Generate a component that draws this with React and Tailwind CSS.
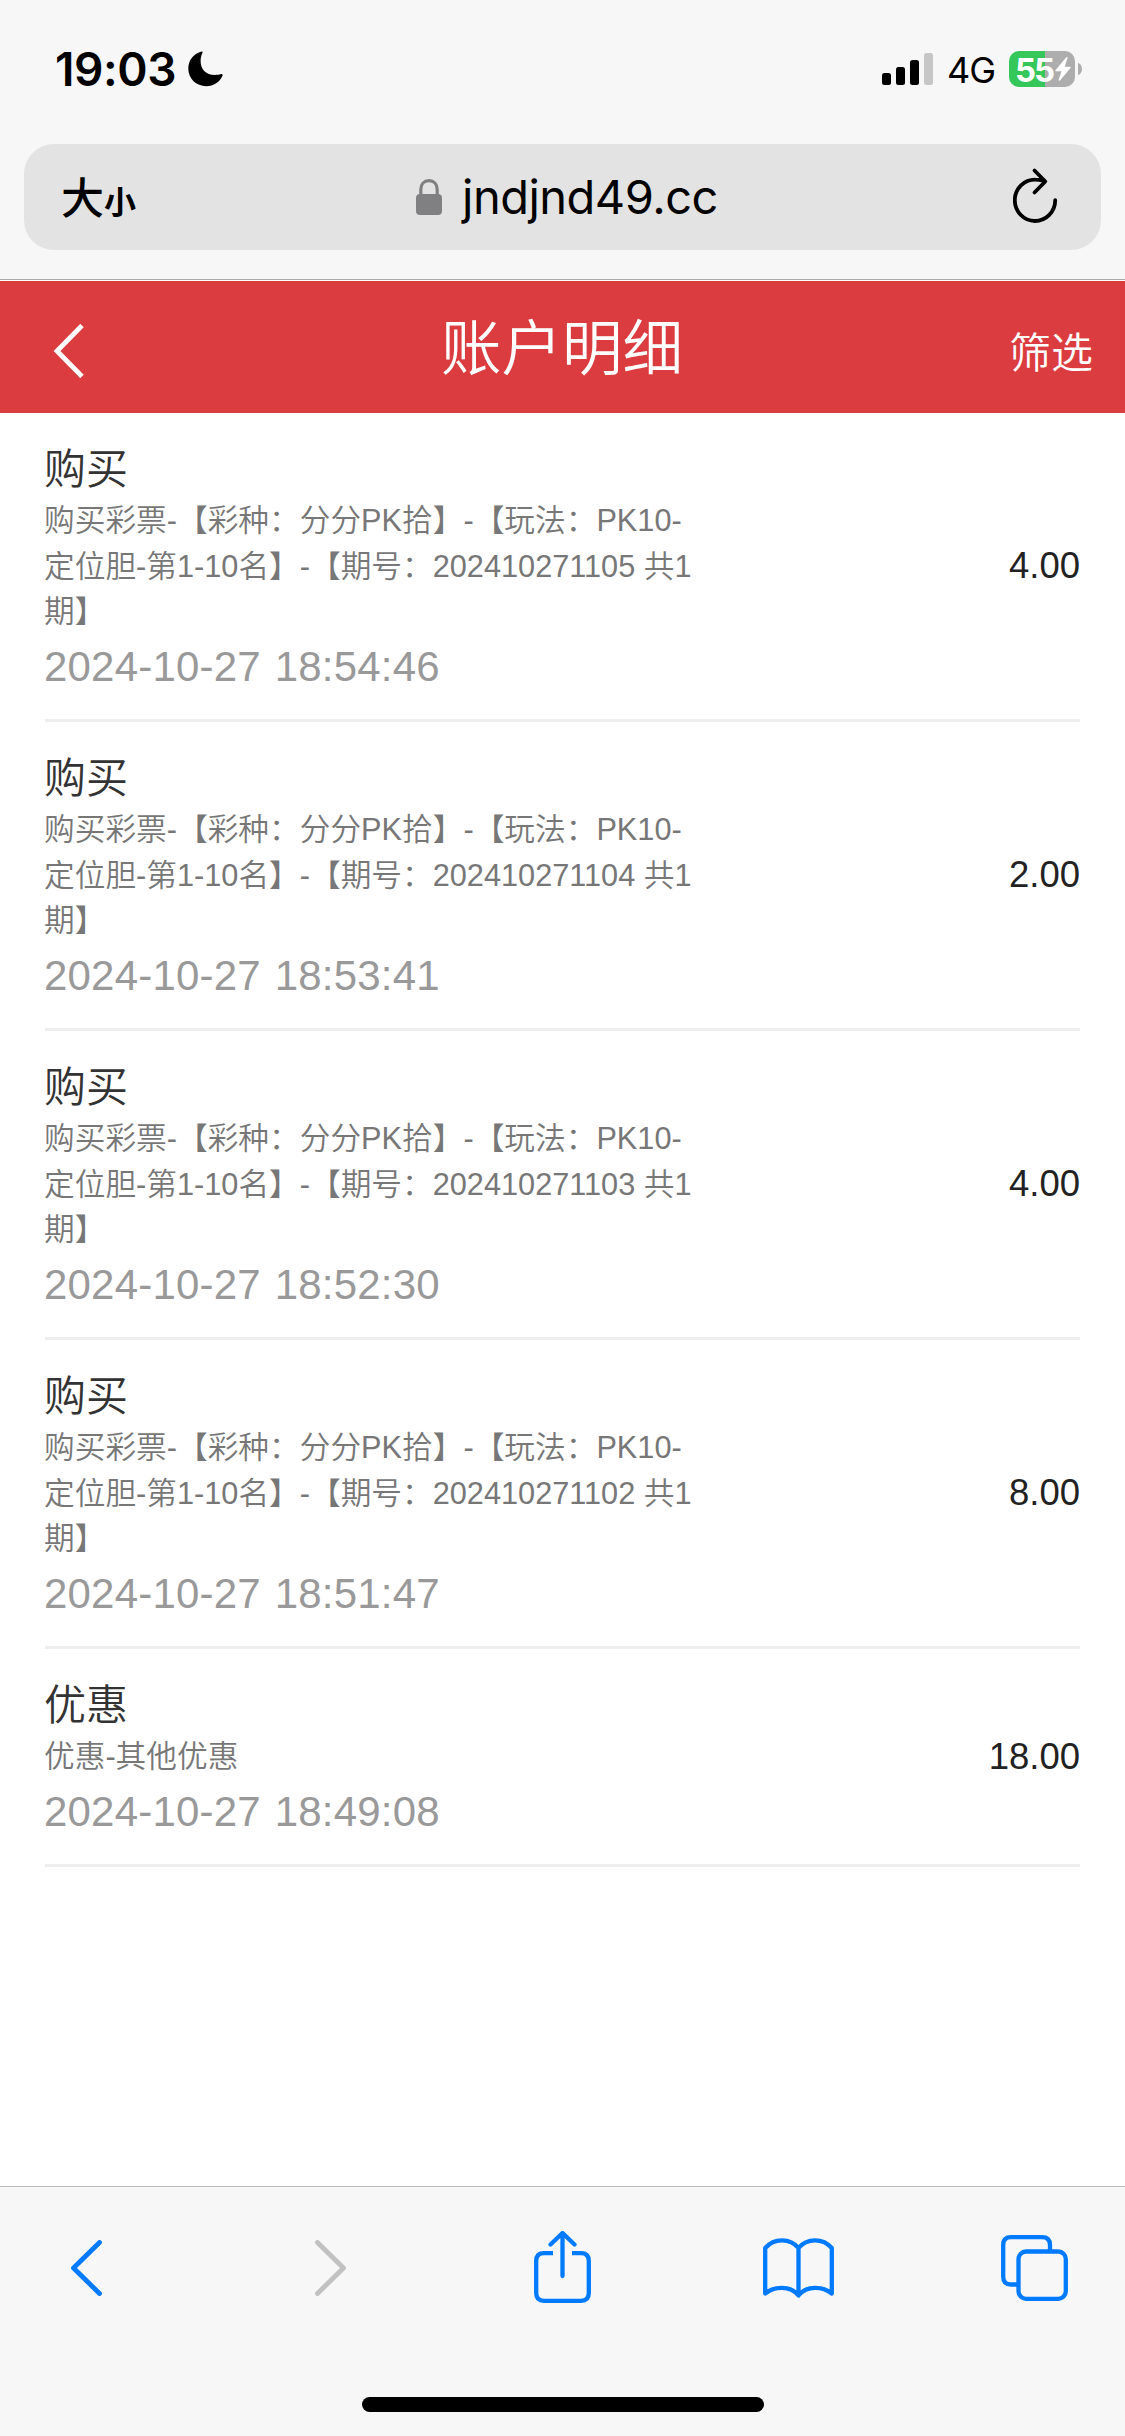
const records = [
    {
        id: 1,
        type: '购买',
        detail: '购买彩票-【彩种：分分PK拾】-【玩法：PK10-定位胆-第1-10名】-【期号：202410271105 共1期】',
        time: '2024-10-27 18:54:46',
        amount: '4.00'
    },
    {
        id: 2,
        type: '购买',
        detail: '购买彩票-【彩种：分分PK拾】-【玩法：PK10-定位胆-第1-10名】-【期号：202410271104 共1期】',
        time: '2024-10-27 18:53:41',
        amount: '2.00'
    },
    {
        id: 3,
        type: '购买',
        detail: '购买彩票-【彩种：分分PK拾】-【玩法：PK10-定位胆-第1-10名】-【期号：202410271103 共1期】',
        time: '2024-10-27 18:52:30',
        amount: '4.00'
    },
    {
        id: 4,
        type: '购买',
        detail: '购买彩票-【彩种：分分PK拾】-【玩法：PK10-定位胆-第1-10名】-【期号：202410271102 共1期】',
        time: '2024-10-27 18:51:47',
        amount: '8.00'
    },
    {
        id: 5,
        type: '优惠',
        detail: '优惠-其他优惠',
        time: '2024-10-27 18:49:08',
        amount: '18.00'
    }
];

function StatusBar() {
    return (
        <div className="flex h-36 items-start justify-between pl-[55px] pr-[43px] pt-[41px] font-['Inter',sans-serif] text-black">
            <div className="flex h-14 items-center">
                <span className="w-[121px] whitespace-nowrap text-[46px] font-semibold leading-[56px] tracking-[-0.4px]">19:03</span>
                <svg className="ml-3 h-9 w-9" viewBox="0 0 36 36">
                    <path d="M13.6 .6C6 2.600 .3 9 .3 17.600C.3 27.800 8.200 35.300 18.200 35.300C25.600 35.300 32 31.200 34.600 24.600C35 23.500 34.200 22.600 33 23C31 23.600 29.200 23.900 26.800 23.900C18.200 23.900 12.600 18.600 12.600 10C12.600 7 13.200 4.500 14.300 2.200C14.900 1 14.500 .4 13.600 .6Z" />
                </svg>
            </div>
            <div className="flex h-14 items-center">
                <svg className="h-8 w-[51px]" viewBox="0 0 51 32">
                    <rect x="0" y="20" width="9" height="12" rx="2.500" />
                    <rect x="14" y="14" width="9" height="18" rx="2.500" />
                    <rect x="28" y="7" width="9" height="25" rx="2.500" />
                    <rect x="42" y="0" width="9" height="32" rx="2.500" fill="#c6c6c6" />
                </svg>
                <span className="ml-3.5 w-[50px] whitespace-nowrap pt-0.5 text-[36px] leading-[42px] tracking-[-1px]">4G</span>
                <div className="ml-3 flex h-9 w-[66px] items-center rounded-[10px] bg-[linear-gradient(90deg,#35c759_36px,#adadad_36px)] pl-1.5">
                    <span className="w-10 whitespace-nowrap pt-0.5 text-[33px] font-bold leading-10 tracking-[-2px] text-white">55</span>
                    <svg className="h-6 w-4" viewBox="0 0 16 24" fill="#fff">
                        <path d="M11.300 .3L.6 13C.1 13.700 .4 14.200 1.100 14.200H6.500L3.700 22.800C3.500 23.700 4.300 24.200 5 23.500L15.500 11.100C16 10.400 15.700 9.800 15 9.800H9.700L12.500 1.200C12.800 .3 12 -.3 11.300 .3Z" />
                    </svg>
                </div>
                <svg className="ml-[3px] h-3 w-1" viewBox="0 0 4 12" fill="#adadad">
                    <path d="M0 0C2.500 .8 4 3 4 6S2.500 11.200 0 12Z" />
                </svg>
            </div>
        </div>
    );
}

function AddressBar() {
    return (
        <div className="mx-6 flex h-[106px] items-center rounded-[30px] bg-[#e3e3e3] text-black">
            <div className="mb-[3px] flex w-[392px] items-baseline pl-[37px] font-['Noto_Sans_CJK_SC',sans-serif] font-medium leading-none">
                <span className="text-[43px]">大</span>
                <span className="text-[32px] font-bold">小</span>
            </div>
            <svg className="h-9 w-[26px]" viewBox="0 0 26 36">
                <path d="M4.800 17V10.500C4.800 5 8.200 1.700 13 1.700S21.200 5 21.200 10.500V17" fill="none" stroke="#808082" strokeWidth="3.200" />
                <rect x="0" y="15" width="26" height="21" rx="4" fill="#808082" />
            </svg>
            <span className="ml-5 w-[551px] font-['Inter',sans-serif] text-[47px] leading-[56px] tracking-[-0.5px]">jndjnd49.cc</span>
            <svg className="mb-1 h-14 w-12" viewBox="0 0 48 56" fill="none" stroke="#000" strokeWidth="3.800" strokeLinecap="round" strokeLinejoin="round">
                <path d="M29 13.500C27 12.800 25 12.600 22.500 12.600A20.200 20.700 0 1 0 42.200 33.200" />
                <path d="M21.500 3.500L32.300 14.500L21.500 25.500" />
            </svg>
        </div>
    );
}

function PageHeader() {
    return (
        <header className="grid h-[132px] grid-cols-[1fr_auto_1fr] items-center bg-[#db3c40] pl-[53px] pr-[32px] pt-2 font-[350] text-white">
            <svg className="h-[54px] w-[31px]" viewBox="0 0 31 54" fill="none" stroke="#fff" strokeWidth="4.800">
                <path d="M29 1.500L4 27L29 52.500" />
            </svg>
            <h1 className="-ml-[22px] pb-1 text-[60.500px] font-[350] leading-[90px]">账户明细</h1>
            <span className="justify-self-end pt-[5px] text-[42px] leading-[63px]">筛选</span>
        </header>
    );
}

function RecordItem({ record }) {
    return (
        <li className="mx-[45px] flex items-center justify-between border-b-[3px] border-[#eeeeee] pb-[21.500px] pt-[24px]">
            <div className="-ml-px w-[648px]">
                <h2 className="pt-0.5 text-[42px] font-[350] leading-[61px] text-[#333333]">{record.type}</h2>
                <p className="-mt-0.5 text-[30.700px] leading-[45.500px] text-[#777777]">{record.detail}</p>
                <p className="text-[42px] leading-[63px] tracking-[0.2px] text-[#999999] [word-spacing:2px]">{record.time}</p>
            </div>
            <span className="pb-[2px] text-[36.500px] leading-[54px] text-[#222222]">{record.amount}</span>
        </li>
    );
}

function Toolbar() {
    return (
        <footer className="h-[250px] border-t border-[#bdbdbd] bg-[#f7f7f7]">
            <div className="flex h-[162px] items-center pl-[70px]">
                <svg className="h-14 w-[33px]" viewBox="0 0 33 56" fill="none" stroke="#007aff" strokeWidth="4.800" strokeLinecap="round" strokeLinejoin="round">
                    <path d="M29.500 2.500L3.500 28L29.500 53.500" />
                </svg>
                <svg className="ml-[211px] h-14 w-[33px]" viewBox="0 0 33 56" fill="none" stroke="#c1c1c1" strokeWidth="4.800" strokeLinecap="round" strokeLinejoin="round">
                    <path d="M3.500 2.500L29.500 28L3.500 53.500" />
                </svg>
                <svg className="mb-[3px] ml-[187px] h-[72px] w-[57px]" viewBox="0 0 57 72" fill="none" stroke="#007aff" strokeWidth="4.300" strokeLinecap="round" strokeLinejoin="round">
                    <path d="M19 22.200H10Q2.200 22.200 2.200 30V62Q2.200 69.800 10 69.800H47Q54.800 69.800 54.800 62V30Q54.800 22.200 47 22.200H38" strokeLinecap="butt" />
                    <path d="M28.500 45V2.500M16.500 13.500L28.500 2L40.500 13.500" />
                </svg>
                <svg className="ml-[172px] h-[60px] w-[71px]" viewBox="0 0 71 60" fill="none" stroke="#007aff" strokeWidth="4.300" strokeLinecap="round" strokeLinejoin="round">
                    <path d="M35.500 10C31.500 5 26 2.300 19 2.300S6.500 5 2.200 10V55.500C6.500 52 12 49.800 19 49.800S31.500 52.500 35.500 57.500C39.500 52.500 45 49.800 52 49.800S64.500 52 68.800 55.500V10C64.500 5 59 2.300 52 2.300S39.500 5 35.500 10V57" />
                </svg>
                <svg className="ml-[167px] h-[66px] w-[67px]" viewBox="0 0 67 66" fill="none" stroke="#007aff" strokeWidth="4.300">
                    <path d="M16 49.500H10Q2.200 49.500 2.200 41.500V10Q2.200 2.200 10 2.200H41Q49 2.200 49 10V16" />
                    <rect x="17.500" y="16.500" width="47.300" height="47.300" rx="7.500" />
                </svg>
            </div>
            <div className="mx-auto mt-12 h-[15px] w-[402px] rounded-full bg-black" />
        </footer>
    );
}

export default function App() {
    return (
        <div className="flex h-[2436px] w-[1125px] flex-col overflow-hidden bg-white font-['Liberation_Sans','Noto_Sans_CJK_SC',sans-serif]">
            <div className="mb-px h-[280px] border-b border-[#a9a9a9] bg-[#f7f7f7]">
                <StatusBar />
                <AddressBar />
            </div>
            <PageHeader />
            <ul className="flex-1 font-[350]">
                {records.map((record) => (
                    <RecordItem key={record.id} record={record} />
                ))}
            </ul>
            <Toolbar />
        </div>
    );
}
